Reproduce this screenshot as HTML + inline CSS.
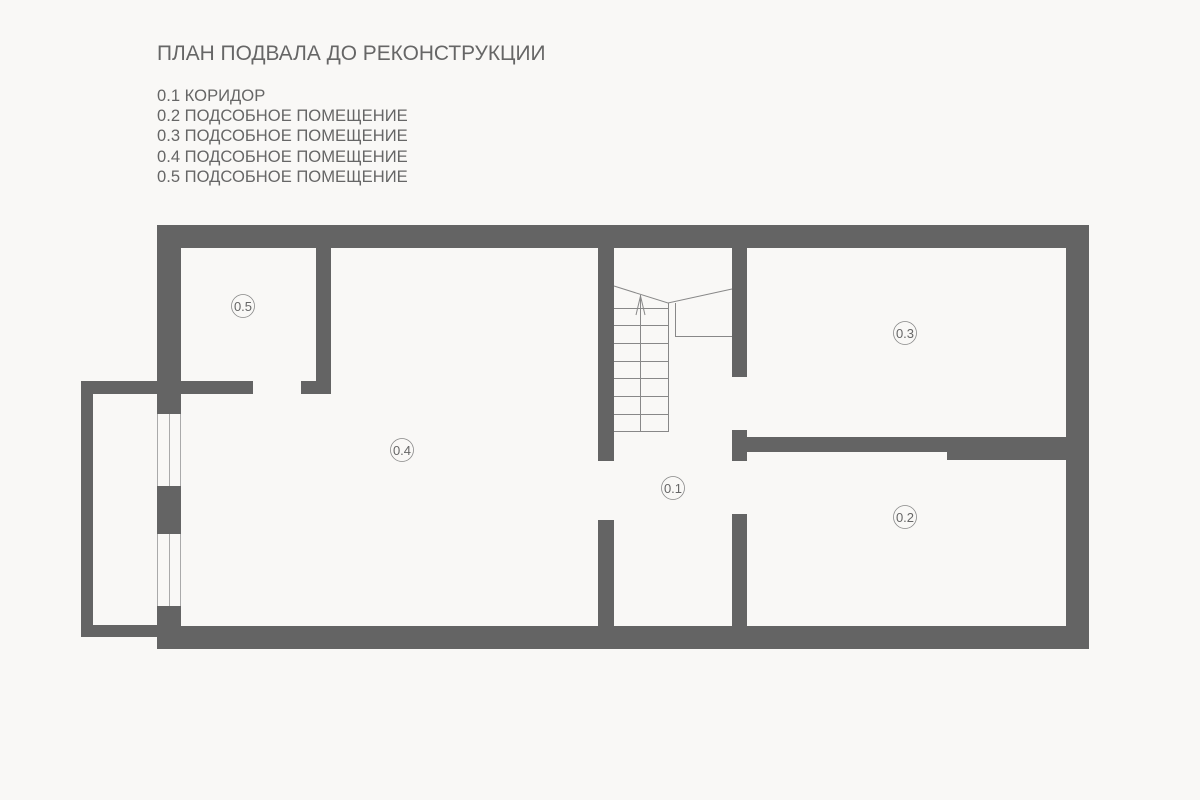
<!DOCTYPE html>
<html><head><meta charset="utf-8"><style>
body{margin:0;width:1200px;height:800px;background:#f9f8f6;overflow:hidden;position:relative;font-family:"Liberation Sans",sans-serif;color:#666}
.t{position:absolute;left:157px;top:42px;font-size:20.9px;white-space:nowrap}
.l{position:absolute;left:157px;top:86px;font-size:16.6px;line-height:20.2px;white-space:nowrap}
svg{position:absolute;left:0;top:0}
</style></head><body>
<div class="t">ПЛАН ПОДВАЛА ДО РЕКОНСТРУКЦИИ</div>
<div class="l">0.1 КОРИДОР<br>0.2 ПОДСОБНОЕ ПОМЕЩЕНИЕ<br>0.3 ПОДСОБНОЕ ПОМЕЩЕНИЕ<br>0.4 ПОДСОБНОЕ ПОМЕЩЕНИЕ<br>0.5 ПОДСОБНОЕ ПОМЕЩЕНИЕ</div>
<svg width="1200" height="800" viewBox="0 0 1200 800">
<g fill="#646464">
<rect x="157" y="225" width="932" height="23"/>
<rect x="157" y="626" width="932" height="23"/>
<rect x="1066" y="225" width="23" height="424"/>
<rect x="157" y="225" width="24" height="189"/>
<rect x="157" y="486" width="24" height="48"/>
<rect x="157" y="606" width="24" height="43"/>
<rect x="81" y="381" width="12" height="256"/>
<rect x="81" y="381" width="76" height="13"/>
<rect x="81" y="625" width="76" height="12"/>
<rect x="157" y="381" width="96" height="13"/>
<rect x="301" y="381" width="30" height="13"/>
<rect x="316" y="248" width="15" height="146"/>
<rect x="598" y="248" width="16" height="213"/>
<rect x="598" y="520" width="16" height="106"/>
<rect x="732" y="248" width="15" height="129"/>
<rect x="732" y="430" width="15" height="31"/>
<rect x="732" y="514" width="15" height="112"/>
<rect x="747" y="437" width="319" height="15"/>
<rect x="947" y="437" width="119" height="23"/>
</g>
<g stroke="#aaa" stroke-width="1" fill="none">
<line x1="157.5" y1="414" x2="157.5" y2="486"/><line x1="169.5" y1="414" x2="169.5" y2="486"/><line x1="180.5" y1="414" x2="180.5" y2="486"/>
<line x1="157.5" y1="534" x2="157.5" y2="606"/><line x1="169.5" y1="534" x2="169.5" y2="606"/><line x1="180.5" y1="534" x2="180.5" y2="606"/>
</g>
<g stroke="#888" stroke-width="1" fill="none">
<polyline points="614,286 668,303 732,289"/>
<polyline points="675.5,303 675.5,336.5 732,336.5"/>
<line x1="668.5" y1="303" x2="668.5" y2="432"/>
<line x1="640.5" y1="295" x2="640.5" y2="432"/>
<polyline points="636,315 640.5,296 645,315"/>
<path d="M614 308.5H668M614 325.5H668M614 343.5H668M614 361.5H668M614 378.5H668M614 396.5H668M614 414.5H668M614 431.5H668"/>
</g>
<g stroke="#888" stroke-width="0.8" fill="none">
<circle cx="243" cy="306" r="11.5"/><circle cx="905" cy="333" r="11.5"/><circle cx="402" cy="450" r="11.5"/><circle cx="673" cy="488" r="11.5"/><circle cx="905" cy="517" r="11.5"/>
</g>
<g font-family="Liberation Sans,sans-serif" font-size="13" fill="#666" text-anchor="middle">
<text x="243" y="311">0.5</text><text x="905" y="338">0.3</text><text x="402" y="455">0.4</text><text x="673" y="493">0.1</text><text x="905" y="522">0.2</text>
</g>
</svg>
</body></html>
